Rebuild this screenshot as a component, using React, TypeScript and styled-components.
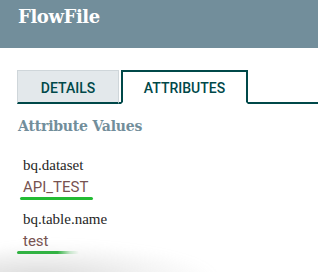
import styled, {createGlobalStyle} from 'styled-components';

const GlobalStyle = createGlobalStyle`
  html, body {
    margin: 0;
    padding: 0;
    background: #ffffff;
  }
`;

const Page = styled.div`
  position: relative;
  width: 318px;
  height: 272px;
  overflow: hidden;
  background: #ffffff;
`;

const Header = styled.div`
  height: 48px;
  background: #728e9b;
  padding: 6px 0 0 18px;
  box-sizing: border-box;
  color: #ffffff;
  font-family: 'DejaVu Serif', serif;
  font-weight: bold;
  font-size: 18px;
  letter-spacing: -0.4px;
`;

const TabBar = styled.div`
  display: flex;
  align-items: flex-end;
  margin: 22px 0 0 17px;
  border-bottom: 2px solid #004849;
`;

const Tab = styled.div<{$active?: boolean}>`
  height: 34px;
  box-sizing: border-box;
  display: flex;
  align-items: center;
  justify-content: center;
  font-family: Roboto, 'Liberation Sans', sans-serif;
  font-weight: 500;
  font-size: 14px;
  color: #004849;
  margin-bottom: -2px;
  background: ${(p) => (p.$active ? '#ffffff' : '#e3e8eb')};
  border: 1px solid ${(p) => (p.$active ? '#004849' : '#cfd6da')};
  border-width: ${(p) => (p.$active ? '2px 2px 0 2px' : '1px 1px 0 1px')};
  border-bottom: ${(p) => (p.$active ? '2px solid #ffffff' : '2px solid #004849')};
  width: ${(p) => (p.$active ? '127px' : '102px')};
  margin-right: ${(p) => (p.$active ? '0' : '2px')};
  padding-top: 2px;
`;

const Content = styled.div`
  padding: 14px 0 0 18px;
`;

const SectionTitle = styled.div`
  font-family: 'DejaVu Serif', serif;
  font-weight: bold;
  font-size: 14px;
  color: #728e9b;
  letter-spacing: -0.2px;
  margin-bottom: 22px;
`;

const Attribute = styled.div`
  display: flex;
  flex-direction: column;
  align-items: flex-start;
  padding-left: 5px;
  margin-bottom: 10px;
`;

const Name = styled.div`
  font-family: 'Liberation Serif', serif;
  font-size: 15px;
  color: #262626;
  line-height: 18px;
`;

const Value = styled.div`
  font-family: Roboto, 'Liberation Sans', sans-serif;
  font-size: 15px;
  color: #775351;
  line-height: 18px;
  margin-top: 4px;
`;

const Marker = styled.div<{$width: number; $shift: number; $fade?: boolean}>`
  height: 3px;
  width: ${(p) => p.$width}px;
  margin: 1px 0 0 ${(p) => p.$shift}px;
  border-radius: 2px;
  background: ${(p) =>
    p.$fade
      ? 'linear-gradient(90deg, #27b53a 0%, #27b53a 65%, rgba(39,181,58,0.25) 85%, rgba(39,181,58,0) 100%)'
      : '#22bb33'};
`;

const Smudge = styled.div`
  position: absolute;
  left: -40px;
  bottom: -30px;
  width: 260px;
  height: 60px;
  border-radius: 50%;
  background: radial-gradient(ellipse at 30% 60%, rgba(120,120,120,0.28), rgba(160,160,160,0.12) 45%, rgba(255,255,255,0) 70%);
  filter: blur(4px);
  pointer-events: none;
`;

const attributes = [
  {name: 'bq.dataset', value: 'API_TEST', marker: 73, shift: -3, fade: false},
  {name: 'bq.table.name', value: 'test', marker: 62, shift: -6, fade: true},
];

export default function App() {
  return (
    <Page>
      <GlobalStyle />
      <Header>FlowFile</Header>
      <TabBar>
        <Tab>DETAILS</Tab>
        <Tab $active>ATTRIBUTES</Tab>
      </TabBar>
      <Content>
        <SectionTitle>Attribute Values</SectionTitle>
        {attributes.map((a) => (
          <Attribute key={a.name}>
            <Name>{a.name}</Name>
            <Value>{a.value}</Value>
            <Marker $width={a.marker} $shift={a.shift} $fade={a.fade} />
          </Attribute>
        ))}
      </Content>
      <Smudge />
    </Page>
  );
}
